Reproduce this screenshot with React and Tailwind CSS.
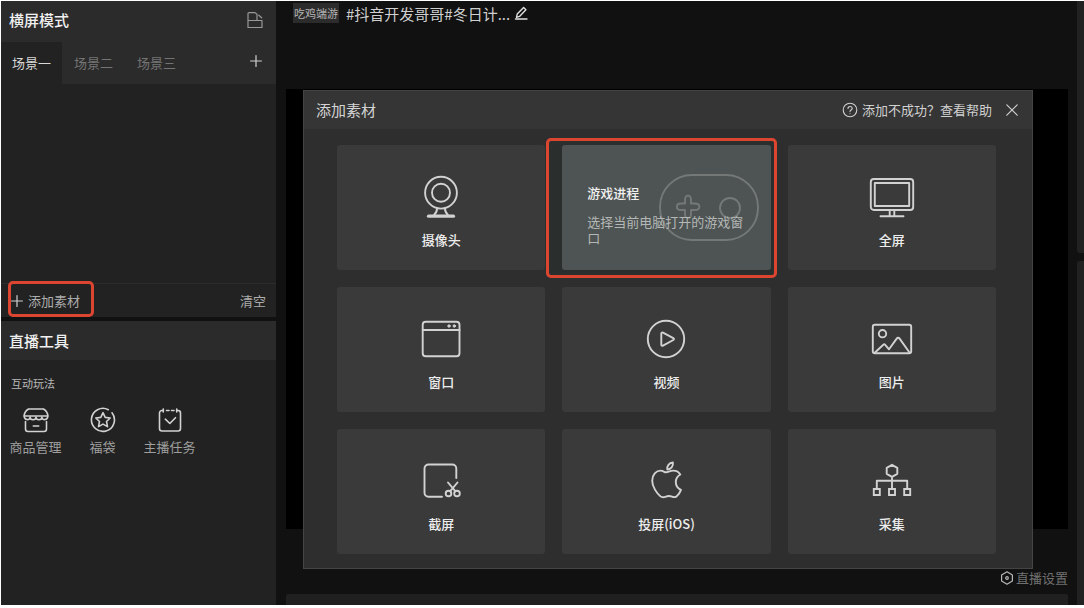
import React from "react";

const line = {
  fill: "none",
  stroke: "currentColor",
  strokeWidth: 1.9,
  strokeLinecap: "round",
  strokeLinejoin: "round",
  "aria-hidden": true,
};

function SourceIcon({ children }) {
  return (
    <svg viewBox="0 0 48 48" className="size-12 text-[#d2d2d2]" {...line}>
      {children}
    </svg>
  );
}

const sources = [
  {
    name: "摄像头",
    icon: (
      <>
        <circle cx="24" cy="18.7" r="15.9" />
        <circle cx="24" cy="18.7" r="9" />
        <path d="M20 34.5c.3 3.5-1.5 5-3.5 7M28 34.5c-.3 3.5 1.5 5 3.5 7" />
        <path d="M11.5 42.200h25" strokeWidth="3.200" />
      </>
    ),
  },
  { name: "游戏进程", detail: "选择当前电脑打开的游戏窗口" },
  {
    name: "全屏",
    icon: (
      <>
        <rect x="2.8" y="5" width="42.4" height="31" rx="3" />
        <rect x="6.8" y="9" width="34.4" height="23" />
        <path d="M21.7 36v6M26.3 36v6M12.5 42.3h23" />
      </>
    ),
  },
  {
    name: "窗口",
    icon: (
      <>
        <rect x="5.7" y="5.7" width="36.8" height="34.6" rx="3" />
        <path d="M5.7 14h36.8" />
        <circle cx="32" cy="10" r="1.2" fill="currentColor" strokeWidth="1" />
        <circle cx="37.3" cy="10" r="1.2" fill="currentColor" strokeWidth="1" />
      </>
    ),
  },
  {
    name: "视频",
    icon: (
      <>
        <circle cx="24" cy="23" r="18.2" />
        <path d="M19.3 17.5v11.2c0 1 .9 1.4 1.700.9l10.300-5.600c.9-.5.9-1.400 0-1.900L21 16.600c-.8-.5-1.700-.1-1.700.9z" />
      </>
    ),
  },
  {
    name: "图片",
    icon: (
      <>
        <rect x="4.8" y="8.8" width="38.4" height="28.4" rx="2" />
        <circle cx="14.5" cy="17.7" r="3.7" />
        <path d="M7 36.5l8.3-7.8c.6-.6 1.2-.6 1.700 0l4 4.600 7.700-10.700c.9-1.200 2-1.200 2.900 0L41.500 36.500" />
      </>
    ),
  },
  {
    name: "截屏",
    icon: (
      <>
        <path d="M39.3 20V10.500a4 4 0 0 0-4-4H11.500a4 4 0 0 0-4 4v24.300a4 4 0 0 0 4 4H25" />
        <circle cx="31.5" cy="35.5" r="2.8" />
        <circle cx="40" cy="35.5" r="2.8" />
        <path d="M31 24.500l7.300 8.700M40.500 24.500l-7.300 8.700" />
      </>
    ),
  },
  {
    name: "投屏(iOS)",
    icon: (
      <>
        <path d="M24 14.300c2 0 4-1.700 7.300-1.700 3.200 0 5.700 1.700 7 3.900-3 1.800-4.500 4-4.500 7.500 0 3.900 2.100 6.500 5.200 7.900-.9 2.500-2.700 4.900-4.300 6.300-1.500 1.200-3 1.200-4.700.5-1.900-.8-3.800-1-6-.1-2.300 1-3.900 1.200-5.500-.2-3.700-3.200-8.300-9.600-8.300-15.700 0-6.300 4-10.100 8.500-10.100 2.500 0 3.500 1.700 5.300 1.700z" />
        <path d="M25.300 11.600c-.8-3.600 2-6.800 5.600-7.200.6 3.800-2 7-5.600 7.200z" />
      </>
    ),
  },
  {
    name: "采集",
    icon: (
      <>
        <path d="M24 6.800l5.300 3v6l-5.300 3-5.300-3v-6zM24 18.800v12M8.800 30.800v-8h30.400v8" />
        <path d="M5.800 31h6v6h-6zM21 31h6v6h-6zM36.200 31h6v6h-6z" strokeLinejoin="miter" />
      </>
    ),
  },
];

const tools = [
  {
    name: "商品管理",
    icon: (
      <>
        <path d="M6.500 3h15c2.700 1.700 4.300 4.200 4.300 7H2.200c0-2.800 1.600-5.300 4.300-7z" />
        <path d="M2.200 10c0 4.600 5.900 4.600 5.900 1 0 3.600 5.900 3.600 5.900 0 0 3.600 5.900 3.600 5.900 0 0 3.600 5.900 3.600 5.900-1" />
        <path d="M3.500 15.500v7.500a2.500 2.500 0 0 0 2.500 2.500h16a2.500 2.500 0 0 0 2.500-2.500v-7.500M11.300 20h5.400" />
      </>
    ),
  },
  {
    name: "福袋",
    icon: (
      <>
        <path d="M19.300 3.700A11.500 11.500 0 1 0 23 6.800" />
        <path d="M14 6.700l2.200 4.700 5 .6-3.700 3.500 1 5.100-4.500-2.500-4.500 2.500 1-5.100L6.800 12l5-.6z" />
      </>
    ),
  },
  {
    name: "主播任务",
    icon: (
      <>
        <path d="M6.500 4.500H6A2.500 2.500 0 0 0 3.500 7v15.500A2.500 2.500 0 0 0 6 25h16a2.500 2.500 0 0 0 2.500-2.500V7A2.500 2.500 0 0 0 22 4.500h-.5M10.500 4.500h2.500M15.500 4.500h2.500M7.300 3v3M20.700 3v3" />
        <path d="M9.300 13.200l4.500 4.300 5.700-5.800" />
      </>
    ),
  },
];

function Plus() {
  return (
    <svg viewBox="0 0 12 12" className="size-3 text-[#d0d0d0]" {...line} strokeWidth="1.200">
      <path d="M6 .6v10.800M.6 6h10.800" />
    </svg>
  );
}

function SourceCard({ source }) {
  if (source.detail) {
    return (
      <div className="relative">
        <div className="absolute -top-[7px] -right-[6px] -bottom-2 -left-4 rounded-[5px] border-[3px] border-[#dc4630] bg-[#2a2f2e]" />
        <button
          type="button"
          className="relative flex h-full w-full flex-col items-start overflow-hidden rounded-[3px] bg-[#4e5453] pt-[38px] pr-6 pl-[25px] text-left"
        >
          <svg
            viewBox="0 0 100 68"
            className="absolute top-[29px] right-[12px] h-[68px] w-[100px] text-[#747978]"
            {...line}
          >
            <rect x="1" y="1" width="98" height="65" rx="32" />
            <path d="M26 26.500c0-6.500 6-6.500 6 0v3h3.500c6.500 0 6.500 6.500 0 6.500H32v4c0 5.500-6 5.500-6 0v-4h-4c-5.500 0-5.500-6.500 0-6.500h4z" />
            <circle cx="71" cy="34" r="10" />
          </svg>
          <span className="relative text-[13px] leading-5 font-medium text-[#f0f0f0]">{source.name}</span>
          <span className="relative mt-[11px] text-[13px] leading-4 text-[#b4b7b6]">{source.detail}</span>
        </button>
      </div>
    );
  }
  return (
    <button type="button" className="flex flex-col items-center gap-2 rounded-[3px] bg-[#3a3a3a] pt-[29px]">
      <SourceIcon>{source.icon}</SourceIcon>
      <span className="text-[13px] leading-5 font-medium text-[#ededed]">{source.name}</span>
    </button>
  );
}

function Sidebar() {
  return (
    <aside className="flex w-[275px] shrink-0 flex-col gap-1 text-[13px]">
      <section className="flex flex-col bg-[#222222]">
        <header className="flex h-[41px] items-center justify-between bg-[#2b2b2b] pr-3 pb-[3px] pl-2">
          <h2 className="text-[15px] font-medium text-[#f0f0f0]">横屏模式</h2>
          <button type="button" aria-label="切换布局">
            <svg viewBox="0 0 18 18" className="size-[18px] text-[#989898]" {...line} strokeWidth="1.200">
              <path d="M2 9.500h14v7H2zM2 9.500V2.600C2 2 2.400 1.600 3 1.600h6L11 3.200v6.300M12.800 4.200l2.900 2.600" />
            </svg>
          </button>
        </header>
        <nav className="flex h-[42px] bg-[#2b2b2b] pr-[14px]">
          <button type="button" className="w-[61px] bg-[#222222] text-center text-[#d8d8d8]">场景一</button>
          <button type="button" className="w-[63px] text-center text-[#747474]">场景二</button>
          <button type="button" className="w-[63px] text-center text-[#747474]">场景三</button>
          <button type="button" aria-label="新建场景" className="mb-1 ml-auto">
            <Plus />
          </button>
        </nav>
        <div className="h-[199px]" />
        <footer className="flex h-[34px] items-center justify-between border-t border-[#2c2c2c] pr-[10px] pl-[10px] text-[#adadad]">
          <button type="button" className="relative flex items-center gap-[5px]">
            <span className="absolute -top-[10px] -right-[14px] -bottom-[7px] -left-[3px] rounded-[5px] border-[3px] border-[#dc4630]" />
            <Plus />
            添加素材
          </button>
          <button type="button">清空</button>
        </footer>
      </section>
      <section className="flex-1 bg-[#222222]">
        <h2 className="bg-[#2b2b2b] pl-2 text-[15px] leading-[39px] font-medium text-[#f0f0f0]">直播工具</h2>
        <h3 className="mt-[13px] pl-[10px] text-[11px] leading-5 text-[#b8b8b8]">互动玩法</h3>
        <div className="mt-[13px] flex pl-px">
          {tools.map((tool) => (
            <button key={tool.name} type="button" className="flex w-[67px] flex-col items-center gap-[3px] text-[#9e9e9e]">
              <svg viewBox="0 0 28 28" className="size-7 text-[#d2d2d2]" {...line} strokeWidth="1.600">
                {tool.icon}
              </svg>
              <span className="leading-5">{tool.name}</span>
            </button>
          ))}
        </div>
      </section>
    </aside>
  );
}

function AddSourceDialog() {
  return (
    <section
      role="dialog"
      aria-labelledby="dialog-title"
      className="absolute top-px right-[35px] left-[17px] border border-[#444444] bg-[#2e2e2e] pb-[14px]"
    >
      <header className="flex h-[38px] items-center bg-[#353535] pr-3 pl-3">
        <h2 id="dialog-title" className="text-[15px] text-[#d4d4d4]">添加素材</h2>
        <a href="#help" className="ml-auto flex items-center gap-1 text-[13px] text-[#d0d0d0]">
          <svg viewBox="0 0 16 16" className="size-4" {...line} strokeWidth="1.100">
            <circle cx="8" cy="8" r="6.800" />
            <path d="M6 6.500c0-2.700 4.200-2.600 4.200 0C10.200 8 8 8.100 8 9.600M8 11.700v.1" />
          </svg>
          添加不成功？查看帮助
        </a>
        <button type="button" aria-label="关闭" className="ml-3 p-[2px] text-[#d0d0d0]">
          <svg viewBox="0 0 12 12" className="size-3" {...line} strokeWidth="1.200">
            <path d="M.8.8l10.400 10.400M11.200.8L.8 11.200" />
          </svg>
        </button>
      </header>
      <div className="grid auto-rows-[125px] grid-cols-3 gap-[17px] pt-4 pr-9 pl-[33px]">
        {sources.map((source) => (
          <SourceCard key={source.name} source={source} />
        ))}
      </div>
    </section>
  );
}

export default function App() {
  return (
    <div className="flex min-h-screen bg-white pt-px pb-[3px] pl-px font-['Noto_Sans_CJK_SC',sans-serif]">
      <div className="flex flex-1 bg-[#111111]">
        <Sidebar />
        <main className="flex min-w-0 flex-1 flex-col pr-[9px] pl-[10px]">
          <header className="flex h-[88px] items-start pt-[2px] pl-[7px]">
            <span className="bg-[#2c2c2c] px-px text-[11px] leading-5 text-[#b5b5b5]">吃鸡端游</span>
            <h1 className="ml-[7px] text-[15px] leading-[22px] text-[#d0d0d0]">#抖音开发哥哥#冬日计...</h1>
            <button type="button" aria-label="编辑标题" className="mt-[3px] ml-1 text-[#dedede]">
              <svg viewBox="0 0 14 14" className="size-[14px]" {...line} strokeWidth="1.400">
                <path d="M2.500 11.300l.7-3.200L9.600 1.500l2.300 2.200-6.400 6.700zM1.500 13h11.500" />
              </svg>
            </button>
          </header>
          <div className="relative min-h-[440px] flex-1 bg-black">
            <AddSourceDialog />
          </div>
          <div className="flex h-[65px] items-end justify-end pb-[6px]">
            <button type="button" className="flex items-center gap-[2px] text-[13px] leading-5 text-[#707070]">
              <svg viewBox="0 0 14 14" className="size-[14px] text-[#b8b8b8]" {...line} strokeWidth="1.200">
                <path d="M7 .8l5.400 3.100v6.200L7 13.200l-5.400-3.100V3.900z" />
                <circle cx="7" cy="7" r="1.300" />
              </svg>
              直播设置
            </button>
          </div>
          <div className="h-[11px] rounded-t-[2px] bg-[#202020]" />
        </main>
        <div className="flex w-[7px] shrink-0 flex-col gap-2">
          <div className="h-[252px] rounded-bl-[3px] bg-[#212121]" />
          <div className="flex-1 rounded-tl-[3px] bg-[#212121]" />
        </div>
      </div>
    </div>
  );
}
